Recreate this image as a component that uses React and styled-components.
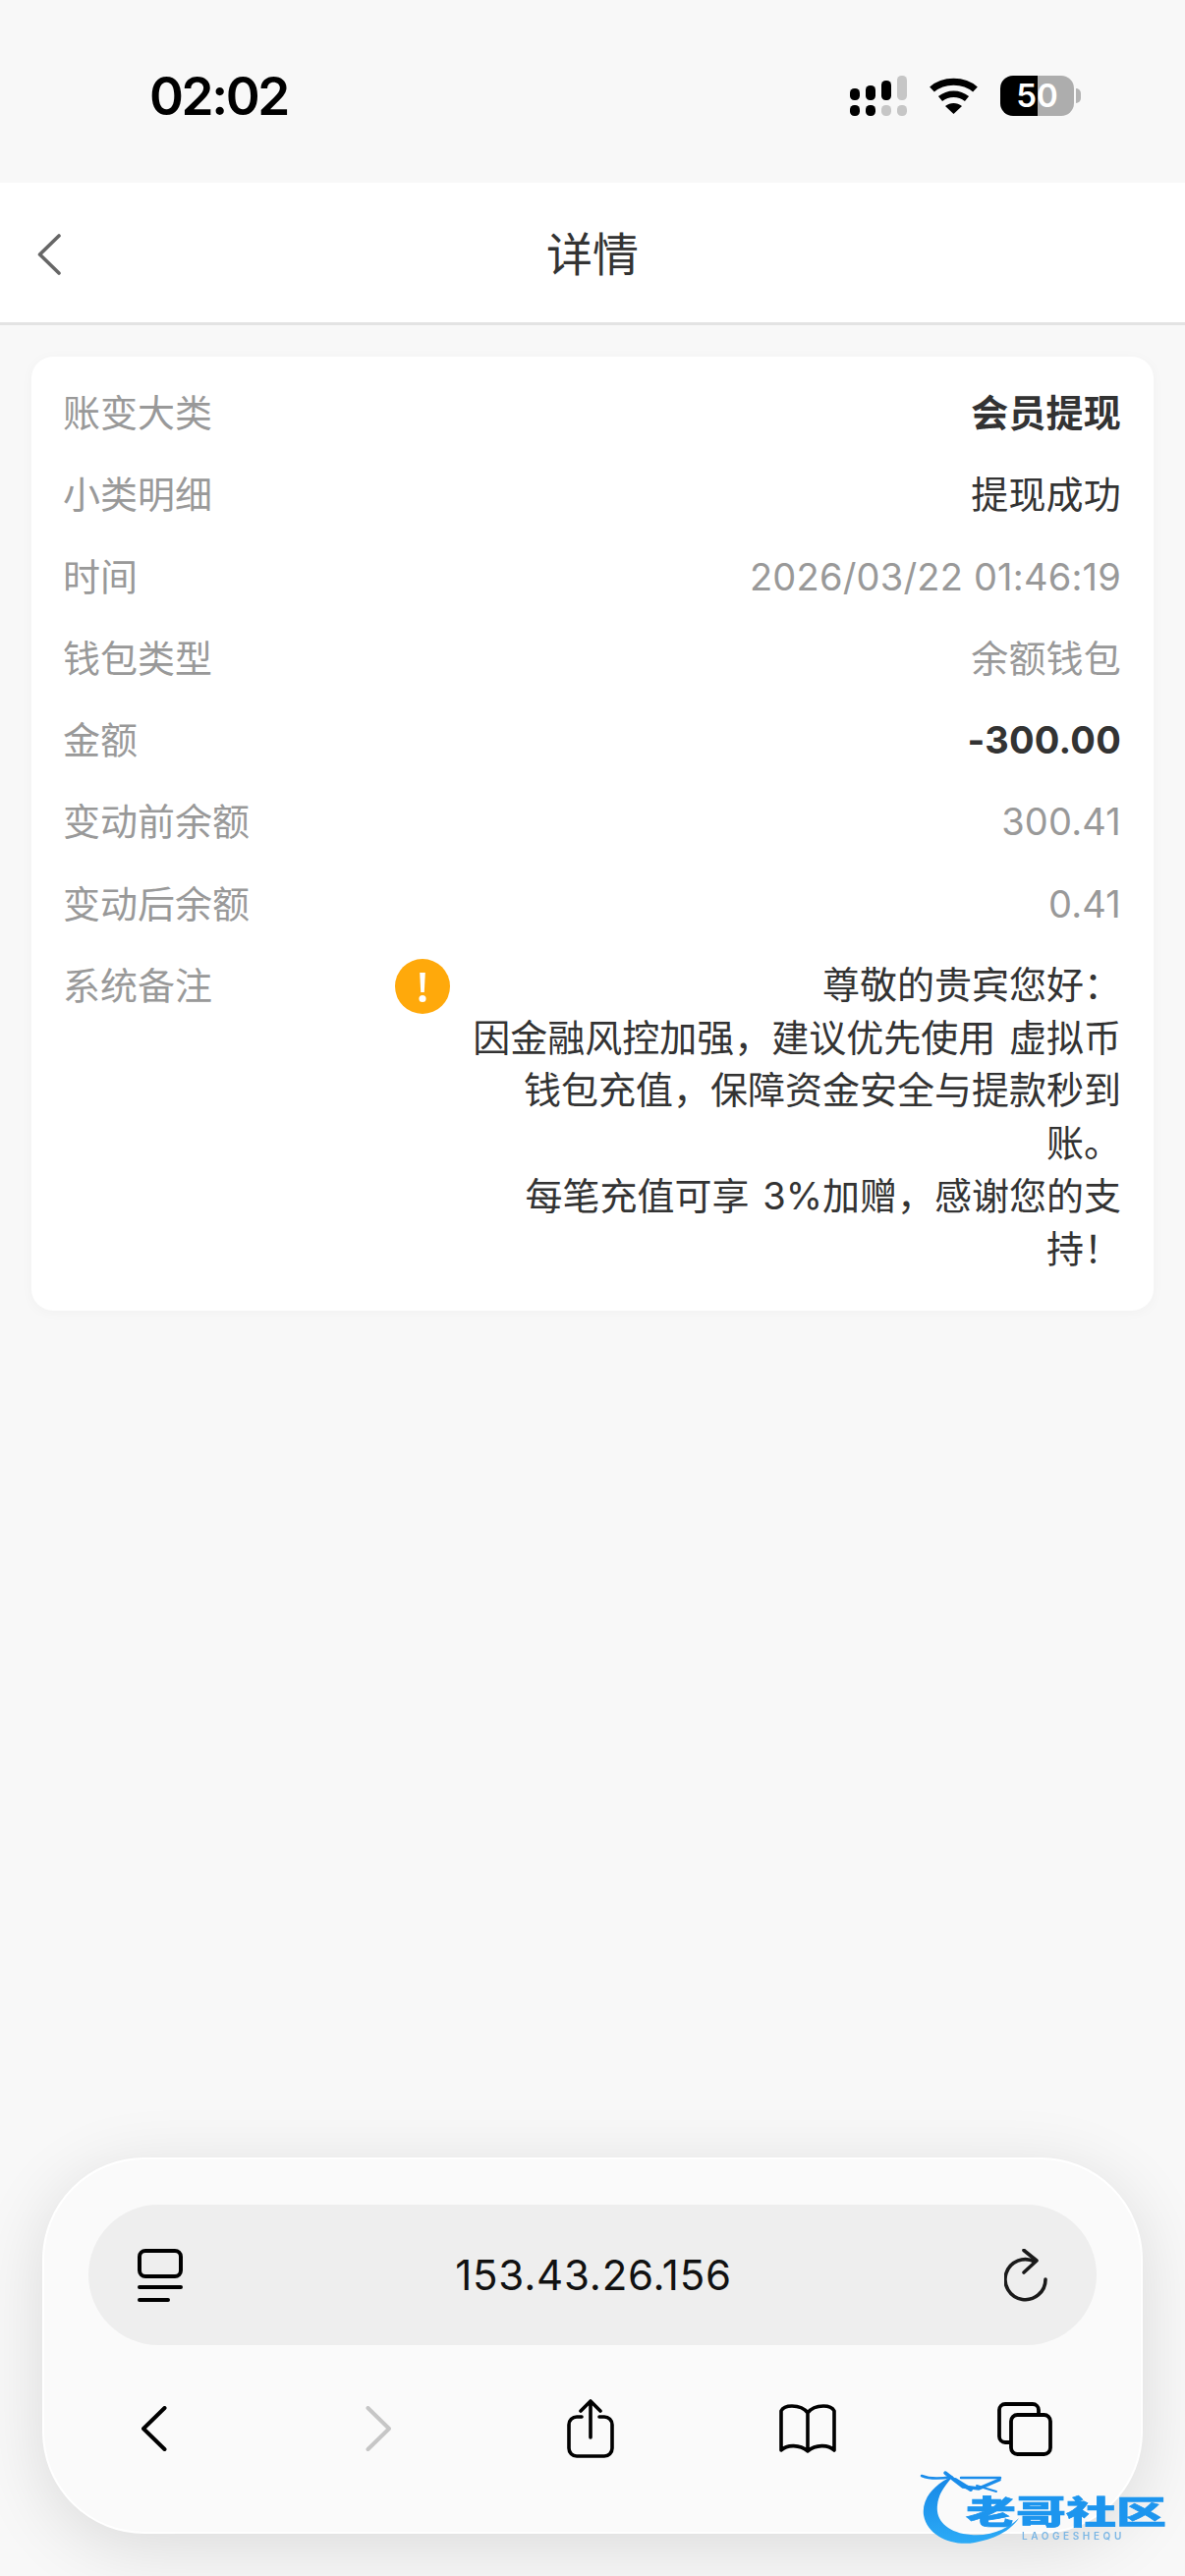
import styled, { createGlobalStyle } from "styled-components";

const GlobalStyle = createGlobalStyle`
  html, body {
    margin: 0;
    padding: 0;
    background: #f8f8f8;
  }
  * {
    box-sizing: border-box;
  }
`;

const fontStack = `Inter, "Noto Sans CJK SC", sans-serif`;

const rows = [
  { label: "账变大类", value: "会员提现", tone: "dark", bold: true },
  { label: "小类明细", value: "提现成功", tone: "dark" },
  { label: "时间", value: "2026/03/22 01:46:19" },
  { label: "钱包类型", value: "余额钱包" },
  { label: "金额", value: "-300.00", tone: "dark", bold: true },
  { label: "变动前余额", value: "300.41" },
  { label: "变动后余额", value: "0.41" },
];

const Page = styled.div`
  position: relative;
  display: flex;
  flex-direction: column;
  height: 2622px;
  overflow: hidden;
  background: #f8f8f8;
  font-family: ${fontStack};
`;

const StatusBar = styled.div`
  display: flex;
  justify-content: space-between;
  align-items: flex-start;
  height: 186px;
  padding: 68px 113px 0 152px;
`;

const Clock = styled.div`
  font-size: 53px;
  font-weight: 600;
  line-height: 60px;
  color: #000;
  letter-spacing: -2.4px;
`;

const StatusIcons = styled.div`
  display: flex;
  gap: 22px;
  margin-top: 9px;
`;

const Battery = styled.div`
  position: relative;
  width: 75px;
  height: 41px;
  border-radius: 13px;
  background: linear-gradient(90deg, #000 0 38px, #adadad 38px 100%);
  color: #fff;
  font-size: 33px;
  font-weight: 600;
  line-height: 41px;
  text-align: center;

  &::after {
    content: "";
    position: absolute;
    top: 13px;
    right: -7px;
    width: 5px;
    height: 15px;
    border-radius: 0 8px 8px 0;
    background: #b4b4b4;
  }
`;

const Header = styled.header`
  display: grid;
  grid-template-columns: 1fr auto 1fr;
  align-items: center;
  height: 145px;
  padding: 3px 38px 0;
  background: #fff;
  border-bottom: 3px solid #e3e3e3;
`;

const Title = styled.h1`
  margin: 0;
  font-size: 47px;
  font-weight: 400;
  line-height: 60px;
  color: #333;
`;

const Main = styled.main`
  flex: 1;
  padding: 32px 32px 0;
`;

const Card = styled.section`
  display: flex;
  flex-direction: column;
  gap: 29.3px;
  padding: 30px 33px 36px 32px;
  border-radius: 22px;
  background: #fff;
  box-shadow: 0 2px 14px rgba(0, 0, 0, 0.03);
`;

const Row = styled.div`
  display: flex;
  justify-content: space-between;
  align-items: flex-start;
  font-size: 38px;
  line-height: 54px;
`;

const Label = styled.span`
  flex: none;
  color: #999;
`;

const Value = styled.span`
  color: ${(p) => (p.$tone === "dark" ? "#333" : "#999")};
  font-weight: ${(p) => (p.$bold ? 700 : 400)};
  letter-spacing: 0.2px;
`;

const NoteIcon = styled.svg`
  flex: none;
  width: 56px;
  height: 56px;
  margin: 0 0 0 auto;
`;

const Note = styled.div`
  flex: none;
  width: 660px;
  margin-left: 23px;
  color: #333;
  line-height: 53.7px;
  text-align: right;
  word-spacing: 3px;
`;

const BrowserPanel = styled.div`
  flex: none;
  height: 383px;
  margin: 0 43px 43px;
  padding: 46px 45px 0;
  border: 2px solid #fff;
  border-radius: 104px;
  background: #fafafa;
  box-shadow: 0 14px 70px rgba(0, 0, 0, 0.12);
`;

const UrlBar = styled.div`
  display: flex;
  justify-content: space-between;
  align-items: center;
  height: 143px;
  padding: 0 50px;
  border-radius: 72px;
  background: #eeeeee;
`;

const UrlText = styled.span`
  font-size: 42px;
  letter-spacing: 0.8px;
  color: #111;
`;

const Toolbar = styled.nav`
  display: grid;
  grid-template-columns: repeat(5, 1fr);
  align-items: center;
  justify-items: center;
  height: 170px;
  margin: 0 -38px 0 -42px;
`;

const ToolCell = styled.div`
  display: flex;
  transform: translateX(${(p) => p.$shift || 0}px);
`;

const Watermark = styled.div`
  position: absolute;
  left: 920px;
  top: 2500px;
  width: 286px;
  height: 110px;
  filter: blur(0.7px);
  pointer-events: none;
`;

const WatermarkArt = styled.svg`
  position: absolute;
  inset: 0;
`;

const WatermarkName = styled.div`
  position: absolute;
  left: 63px;
  top: 25px;
  font-family: "Noto Sans CJK SC", sans-serif;
  font-size: 51px;
  font-weight: 900;
  line-height: 60px;
  white-space: nowrap;
  color: #1d95ee;
  -webkit-text-stroke: 1px #1d95ee;
  transform: scaleY(0.64);
`;

const WatermarkSub = styled.div`
  position: absolute;
  left: 120px;
  top: 75px;
  font-size: 10px;
  font-weight: 600;
  line-height: 12px;
  letter-spacing: 3.6px;
  color: #7bb6e4;
`;

function SignalIcon() {
  const tops = [
    [0, 13, "#000"],
    [16, 10, "#000"],
    [32, 5, "#000"],
    [48, 0, "#c6c6c6"],
  ];
  const bottoms = ["#000", "#000", "#c6c6c6", "#c6c6c6"];
  return (
    <svg width="58" height="41" viewBox="0 0 58 41">
      {tops.map(([x, y, fill]) => (
        <rect key={x} x={x} y={y} width="10" height={25 - y} rx="4.5" fill={fill} />
      ))}
      {bottoms.map((fill, i) => (
        <rect key={i} x={i * 16} y="30" width="10" height="11" rx="4.5" fill={fill} />
      ))}
    </svg>
  );
}

function WifiIcon() {
  return (
    <svg width="51" height="41" viewBox="0 0 51 41">
      <path d="M3.5 14 C15 3.5 36 3.5 47.5 14" fill="none" stroke="#000" strokeWidth="7" />
      <path d="M12 23.5 C20 17 31 17 39 23.5" fill="none" stroke="#000" strokeWidth="6.5" />
      <path d="M17 31 C22 27 29 27 34 31 L25.5 39 Z" fill="#000" />
    </svg>
  );
}

function ChevronIcon({ flip, color = "#000" }) {
  return (
    <svg width="26" height="46" viewBox="0 0 26 46">
      <path
        d={flip ? "M2.5 2 L24 23 L2.5 44" : "M23.5 2 L2 23 L23.5 44"}
        fill="none"
        stroke={color}
        strokeWidth="4"
        strokeLinecap="round"
        strokeLinejoin="round"
      />
    </svg>
  );
}

function ShareIcon() {
  return (
    <svg width="48" height="60" viewBox="0 0 48 60" fill="none" stroke="#000" strokeWidth="3.6" strokeLinecap="round" strokeLinejoin="round">
      <path d="M15 18 H10 a8 8 0 0 0 -8 8 V50 a8 8 0 0 0 8 8 H38 a8 8 0 0 0 8 -8 V26 a8 8 0 0 0 -8 -8 H33" />
      <path d="M24 39 V3 M14 12 L24 2 L34 12" />
    </svg>
  );
}

function BookIcon() {
  return (
    <svg width="58" height="50" viewBox="0 0 58 50" fill="none" stroke="#000" strokeWidth="3.6" strokeLinecap="round" strokeLinejoin="round">
      <path d="M29 9 C25 3.5 18 2 13 2 C8 2 4 3 2 7 V47 C8 41 21 41 29 48 C37 41 50 41 56 47 V7 C54 3 50 2 45 2 C40 2 33 3.5 29 9 V48" />
    </svg>
  );
}

function TabsIcon() {
  return (
    <svg width="56" height="55" viewBox="0 0 56 55" fill="none" stroke="#000" strokeWidth="3.8" strokeLinejoin="round">
      <path d="M42 12 V8 a6 6 0 0 0 -6 -6 H8 a6 6 0 0 0 -6 6 V35 a6 6 0 0 0 6 6 H14" />
      <rect x="14" y="13" width="40" height="40" rx="6.5" />
    </svg>
  );
}

function OverviewIcon() {
  return (
    <svg width="46" height="54" viewBox="0 0 46 54" fill="none" stroke="#000" strokeWidth="4" strokeLinecap="round">
      <rect x="2" y="2" width="42" height="26" rx="6" />
      <path d="M2 39 H44 M2 52 H31" />
    </svg>
  );
}

function ReloadIcon() {
  return (
    <svg width="44" height="54" viewBox="0 0 44 54" fill="none" stroke="#1a1a1a" strokeWidth="3.6" strokeLinecap="round" strokeLinejoin="round">
      <path d="M31 13 A20.5 20.5 0 1 0 42 31" />
      <path d="M20 1.5 L33 12 L20 24" />
    </svg>
  );
}

export default function App() {
  return (
    <Page>
      <GlobalStyle />
      <StatusBar>
        <Clock>02:02</Clock>
        <StatusIcons>
          <SignalIcon />
          <WifiIcon />
          <Battery>50</Battery>
        </StatusIcons>
      </StatusBar>

      <Header>
        <svg width="24" height="42" viewBox="0 0 24 42">
          <path d="M22 2 L2.5 21 L22 40" fill="none" stroke="#666" strokeWidth="3.6" strokeLinecap="round" strokeLinejoin="round" />
        </svg>
        <Title>详情</Title>
      </Header>

      <Main>
        <Card>
          {rows.map((row) => (
            <Row key={row.label}>
              <Label>{row.label}</Label>
              <Value $tone={row.tone} $bold={row.bold}>{row.value}</Value>
            </Row>
          ))}
          <Row>
            <Label>系统备注</Label>
            <NoteIcon viewBox="0 0 56 56">
              <circle cx="28" cy="28" r="28" fill="#ffa90b" />
              <path d="M25.2 14 H30.8 L29.8 34 H26.2 Z" fill="#fff" />
              <circle cx="28" cy="40.5" r="3.6" fill="#fff" />
            </NoteIcon>
            <Note>
              尊敬的贵宾您好：
              <br />
              因金融风控加强，建议优先使用 虚拟币钱包充值，保障资金安全与提款秒到账。
              <br />
              每笔充值可享 3%加赠，感谢您的支持！
            </Note>
          </Row>
        </Card>
      </Main>

      <BrowserPanel>
        <UrlBar>
          <OverviewIcon />
          <UrlText>153.43.26.156</UrlText>
          <ReloadIcon />
        </UrlBar>
        <Toolbar>
          <ToolCell $shift={-2}>
            <ChevronIcon />
          </ToolCell>
          <ToolCell $shift={5}>
            <ChevronIcon flip color="#c6c6c6" />
          </ToolCell>
          <ToolCell>
            <ShareIcon />
          </ToolCell>
          <ToolCell>
            <BookIcon />
          </ToolCell>
          <ToolCell>
            <TabsIcon />
          </ToolCell>
        </Toolbar>
      </BrowserPanel>

      <Watermark>
        <WatermarkArt width="286" height="110" viewBox="0 0 286 110">
          <defs>
            <linearGradient id="swoosh" x1="0" y1="0" x2="0" y2="1">
              <stop offset="0" stopColor="#1686e6" />
              <stop offset="1" stopColor="#2cabf6" />
            </linearGradient>
          </defs>
          <path
            d="M50 20 C28 30 18 45 20 60 C24 82 50 92 72 88 C95 84 110 74 117 63 C105 75 85 82 68 80 C45 78 32 66 34 50 C35 38 42 30 50 20 Z"
            fill="url(#swoosh)"
          />
          <g fill="none" stroke="#1a8cea" strokeLinecap="round">
            <path d="M18 20 C28 24 38 23 48 21" strokeWidth="2.5" />
            <path d="M42 17 L60 31 L76 33 L97 24" strokeWidth="3.5" />
            <path d="M58 22 L98 22" strokeWidth="2.5" />
            <path d="M74 30 L94 36" strokeWidth="2" />
            <path d="M52 24 L68 34" strokeWidth="4" />
          </g>
        </WatermarkArt>
        <WatermarkName>老哥社区</WatermarkName>
        <WatermarkSub>LAOGESHEQU</WatermarkSub>
      </Watermark>
    </Page>
  );
}
